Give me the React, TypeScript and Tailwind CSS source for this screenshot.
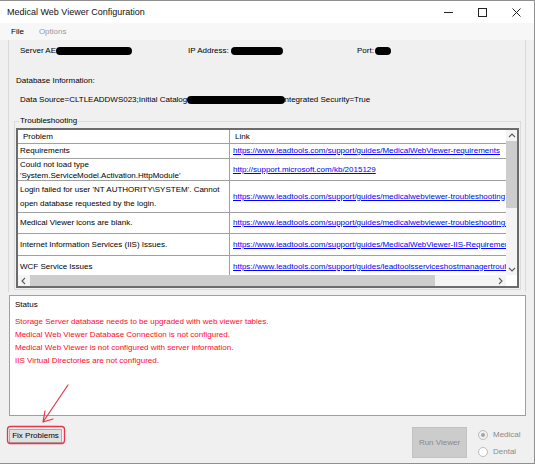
import React from "react";

type Row = {
  problem: string[];
  link: string;
  height: string;
  leading: string;
};

const rows: Row[] = [
  {
    problem: ["Requirements"],
    link: "https://www.leadtools.com/support/guides/MedicalWebViewer-requirements",
    height: "h-[15px]",
    leading: "leading-[10px]",
  },
  {
    problem: ["Could not load type", "'System.ServiceModel.Activation.HttpModule'"],
    link: "http://support.microsoft.com/kb/2015129",
    height: "h-[22px]",
    leading: "leading-[11px]",
  },
  {
    problem: ["Login failed for user 'NT AUTHORITY\\SYSTEM'. Cannot", "open database requested by the login."],
    link: "https://www.leadtools.com/support/guides/medicalwebviewer-troubleshooting",
    height: "h-[32px]",
    leading: "leading-[14px]",
  },
  {
    problem: ["Medical Viewer icons are blank."],
    link: "https://www.leadtools.com/support/guides/medicalwebviewer-troubleshooting-icons",
    height: "h-[21px]",
    leading: "leading-[10px]",
  },
  {
    problem: ["Internet Information Services (IIS) Issues."],
    link: "https://www.leadtools.com/support/guides/MedicalWebViewer-IIS-Requirements",
    height: "h-[22px]",
    leading: "leading-[10px]",
  },
  {
    problem: ["WCF Service Issues"],
    link: "https://www.leadtools.com/support/guides/leadtoolsserviceshostmanagertroubleshooting",
    height: "h-[22px]",
    leading: "leading-[10px]",
  },
];

const statusLines = [
  "Storage Server database needs to be upgraded with web viewer tables.",
  "Medical Web Viewer Database Connection is not configured.",
  "Medical Web Viewer is not configured with server information.",
  "IIS Virtual Directories are not configured.",
];

function Blob({ className }: { className: string }) {
  // redacted value in the screenshot
  return <span className={"inline-block h-[8px] rounded-full bg-black " + className} />;
}

function Chevron({ dir }: { dir: "up" | "down" | "left" | "right" }) {
  const pts = {
    up: "1,5 4,2 7,5",
    down: "1,2 4,5 7,2",
    left: "5,1 2,4 5,7",
    right: "2,1 5,4 2,7",
  }[dir];
  return (
    <svg width="8" height="8" viewBox="0 0 8 8">
      <polyline points={pts} fill="none" stroke="#5a5a5a" strokeWidth="1.1" />
    </svg>
  );
}

export default function App() {
  return (
    <div className="relative w-[535px] h-[464px] flex flex-col bg-[#f0f0f0] border-t border-r border-b border-[#8f8f8f] font-['Liberation_Sans',Arial,sans-serif] text-[8px] leading-[10px] text-black overflow-hidden">
      {/* title bar */}
      <div className="h-[22px] shrink-0 bg-white flex items-center">
        <span className="pl-[7px] text-[9px] leading-[12px] text-[#111]">Medical Web Viewer Configuration</span>
        <div className="ml-auto flex h-full">
          <div className="w-[34px] flex items-center justify-center">
            <svg width="9" height="9" viewBox="0 0 9 9">
              <line x1="0" y1="4.5" x2="9" y2="4.5" stroke="#222" strokeWidth="1" />
            </svg>
          </div>
          <div className="w-[34px] flex items-center justify-center">
            <svg width="9" height="9" viewBox="0 0 9 9">
              <rect x="0.5" y="0.5" width="8" height="8" fill="none" stroke="#222" strokeWidth="1" />
            </svg>
          </div>
          <div className="w-[35px] flex items-center justify-center">
            <svg width="9" height="9" viewBox="0 0 9 9">
              <path d="M0.5 0.5 L8.5 8.5 M8.5 0.5 L0.5 8.5" stroke="#222" strokeWidth="1" />
            </svg>
          </div>
        </div>
      </div>

      {/* menu */}
      <div className="h-[17px] shrink-0 bg-[#f7f7f7] flex items-center gap-[15px] pl-[11px]">
        <span className="text-[#000]">File</span>
        <span className="text-[#9a9a9a]">Options</span>
      </div>

      {/* config panel */}
      <div className="h-[252px] shrink-0 ml-[8px] w-[518px] border-x border-[#d9d9d9] flex flex-col">
        <div className="mt-[6px] ml-[11px] flex h-[10px] items-center">
          <div className="w-[168px] flex items-center">
            <span>Server AE</span>
            <Blob className="w-[76px]" />
          </div>
          <div className="w-[169px] flex items-center">
            <span>IP Address:</span>
            <Blob className="w-[52px] ml-[2px]" />
          </div>
          <div className="flex items-center">
            <span>Port:</span>
            <Blob className="w-[16px] ml-[1px]" />
          </div>
        </div>

        <div className="mt-[20px] ml-[7px]">Database Information:</div>

        <div className="mt-[9px] ml-[11px] flex items-center whitespace-nowrap">
          <span>Data Source=CLTLEADDWS023;Initial Catalog</span>
          <Blob className="relative z-10 w-[98px]" />
          <span className="-ml-[3px]">Integrated Security=True</span>
        </div>

        <fieldset className="mt-[11px] ml-[5px] w-[507px] border border-[#dcdcdc] pb-[1px]">
          <legend className="ml-[4px] px-[1px] leading-[10px]">Troubleshooting</legend>

          <div className="mt-[2px] ml-[1px] w-[503px] h-[160px] border-2 border-[#6b6b6b] bg-white flex flex-col">
            <div className="flex h-[145px]">
              <div className="flex-1 h-[145px] overflow-hidden flex flex-col">
                <div className="h-[14px] shrink-0 flex border-b border-[#a0a0a0]">
                  <div className="w-[212px] shrink-0 border-r border-[#a0a0a0] pl-[5px] flex items-center">Problem</div>
                  <div className="pl-[5px] flex items-center">Link</div>
                </div>
                {rows.map((r) => (
                  <div key={r.link} className={"shrink-0 flex border-b border-[#a0a0a0] " + r.height}>
                    <div className={"w-[212px] shrink-0 border-r border-[#a0a0a0] pl-[2px] flex flex-col justify-center whitespace-nowrap " + r.leading}>
                      {r.problem.map((p) => (
                        <span key={p}>{p}</span>
                      ))}
                    </div>
                    <div className="pl-[3px] flex items-center whitespace-nowrap overflow-hidden">
                      <span className="text-[#0000ff] underline">{r.link}</span>
                    </div>
                  </div>
                ))}
              </div>
              {/* vertical scrollbar */}
              <div className="w-[11px] shrink-0 bg-[#f4f4f4] flex flex-col">
                <div className="h-[11px] flex items-center justify-center">
                  <Chevron dir="up" />
                </div>
                <div className="h-[67px] bg-[#cdcdcd]" />
                <div className="flex-1" />
                <div className="h-[11px] flex items-center justify-center">
                  <Chevron dir="down" />
                </div>
              </div>
            </div>
            {/* horizontal scrollbar */}
            <div className="flex h-[11px]">
              <div className="flex-1 bg-[#f4f4f4] flex items-center">
                <div className="w-[11px] flex items-center justify-center">
                  <Chevron dir="left" />
                </div>
                <div className="ml-[1px] w-[405px] h-full bg-[#cdcdcd]" />
                <div className="flex-1" />
                <div className="w-[11px] flex items-center justify-center">
                  <Chevron dir="right" />
                </div>
              </div>
              <div className="w-[11px] bg-white" />
            </div>
          </div>
        </fieldset>
      </div>

      {/* status */}
      <div className="mt-[3px] ml-[9px] w-[517px] h-[121px] shrink-0 border border-[#a0a0a0] bg-white pt-[4px] pl-[5px]">
        <div className="leading-[10px]">Status</div>
        <div className="mt-[5px] text-[#ff0a2a] leading-[13px]">
          {statusLines.map((s) => (
            <div key={s}>{s}</div>
          ))}
        </div>
      </div>

      {/* bottom buttons */}
      <div className="h-[47px] shrink-0 flex items-start pl-[9px]">
        <button
          type="button"
          className="mt-[13px] w-[53px] h-[14px] bg-[#e1e1e1] border border-[#adadad] text-[8px] leading-[10px] flex items-center justify-center"
        >
          Fix Problems
        </button>
        <button
          type="button"
          disabled
          className="mt-[11px] ml-[350px] w-[55px] h-[31px] bg-[#cccccc] border border-[#c2c2c2] text-[8px] text-[#8a8a8a] flex items-center justify-center"
        >
          Run Viewer
        </button>
        <div className="mt-[14px] ml-[11px] flex flex-col gap-[7px] text-[#8a8a8a]">
          <div className="flex items-center gap-[5px] h-[10px]">
            <span className="w-[10px] h-[10px] rounded-full border border-[#bcbcbc] bg-[#f0f0f0] flex items-center justify-center">
              <span className="w-[4px] h-[4px] rounded-full bg-[#a5a5a5]" />
            </span>
            <span>Medical</span>
          </div>
          <div className="flex items-center gap-[5px] h-[10px]">
            <span className="w-[10px] h-[10px] rounded-full border border-[#bcbcbc] bg-white" />
            <span>Dental</span>
          </div>
        </div>
      </div>

      {/* red hand-drawn annotation */}
      <svg className="absolute left-0 top-0 pointer-events-none" width="535" height="465" viewBox="0 0 535 465">
        <rect x="7.5" y="425.5" width="57" height="17" rx="3" fill="none" stroke="#e8354d" strokeWidth="1.3" />
        <path d="M68 384 L43 421 M43 421 L45 410 M43 421 L53 418" fill="none" stroke="#e8354d" strokeWidth="1.2" strokeLinecap="round" />
      </svg>
    </div>
  );
}
